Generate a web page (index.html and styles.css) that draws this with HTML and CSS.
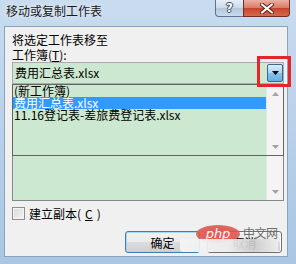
FILE: index.html
```html
<!DOCTYPE html>
<html lang="zh-CN">
<head>
    <meta charset="UTF-8" />
    <title>移动或复制工作表</title>
    <link rel="stylesheet" href="styles.css">
</head>
<body>
<div class="window">
    <div class="titlebar">
        <span class="title">移动或复制工作表</span>
        <div class="cap-btns">
            <span class="cap-btn help">?</span>
            <span class="cap-btn close">
                <svg width="14" height="11" viewBox="0 0 14 11">
                    <path d="M2 1.5 L12 9.5 M12 1.5 L2 9.5" stroke="#5b2117" stroke-width="4" stroke-linecap="square" fill="none"/>
                    <path d="M2 1.5 L12 9.5 M12 1.5 L2 9.5" stroke="#ffffff" stroke-width="2" stroke-linecap="square" fill="none"/>
                </svg>
            </span>
        </div>
    </div>

    <div class="client">
        <div class="label">将选定工作表移至</div>
        <div class="label">工作簿(<u>T</u>):</div>

        <div class="combo">
            <span class="combo-text">费用汇总表.xlsx</span>
            <span class="drop-btn">
                <svg width="7" height="4" viewBox="0 0 7 4"><polygon points="0,0 7,0 3.5,4" fill="#000"/></svg>
            </span>
            <!-- open drop-down list, covers the sheet label and top of the listbox -->
            <div class="dropdown">
                <ul class="items">
                    <li>(新工作簿)</li>
                    <li class="selected">费用汇总表.xlsx</li>
                    <li>11.16登记表-差旅费登记表.xlsx</li>
                </ul>
                <div class="scrollbar">
                    <span class="sb-btn"><svg width="7" height="4" viewBox="0 0 7 4"><polygon points="0,4 7,4 3.5,0" fill="#a3a3a3"/></svg></span>
                    <span class="sb-btn"><svg width="7" height="4" viewBox="0 0 7 4"><polygon points="0,0 7,0 3.5,4" fill="#a3a3a3"/></svg></span>
                </div>
            </div>
        </div>

        <div class="listbox">
            <div class="list-body"></div>
            <div class="scrollbar">
                <span class="sb-btn"><svg width="7" height="4" viewBox="0 0 7 4"><polygon points="0,4 7,4 3.5,0" fill="#a3a3a3"/></svg></span>
                <span class="sb-btn"><svg width="7" height="4" viewBox="0 0 7 4"><polygon points="0,0 7,0 3.5,4" fill="#a3a3a3"/></svg></span>
            </div>
        </div>

        <label class="check-row"><span class="checkbox"></span>建立副本(<u>C</u>)</label>

        <div class="buttons">
            <button class="btn default">确定</button>
            <button class="btn">取消</button>
        </div>
    </div>

    <div class="mark-box"></div>

    <div class="watermark">
        <span class="php">php</span>
        <span class="cn">中文网</span>
        <span class="smear"></span>
    </div>
</div>
</body>
</html>
```

FILE: styles.css
```css
/* Page */
body {
    margin: 0;
    font-family: "Noto Sans CJK SC", sans-serif;
    font-size: 12px;
    color: #000;
}

/* Window frame (Aero glass) */
.window {
    position: relative;
    width: 296px;
    height: 264px;
    box-sizing: border-box;
    padding: 0 8px 7px 4px;
    display: flex;
    flex-direction: column;
    background: linear-gradient(180deg, #c9dcef 0%, #bdd4eb 35%, #aac6e3 100%);
    overflow: hidden;
}

.titlebar {
    height: 26px;
    flex-shrink: 0;
    display: flex;
    justify-content: space-between;
    align-items: flex-start;
}

.title {
    padding: 4px 0 0 2px;
    line-height: 14px;
    color: #1a1a1a;
    text-shadow: 0 0 6px rgba(255, 255, 255, 0.9);
}

/* Caption buttons */
.cap-btns {
    display: flex;
    margin-right: -2px;
}

.cap-btn {
    height: 17px;
    box-sizing: border-box;
    display: flex;
    align-items: center;
    justify-content: center;
    border: 1px solid #5d7490;
    border-top: none;
}

.help {
    width: 28px;
    border-right: none;
    border-radius: 0 0 0 4px;
    background: linear-gradient(180deg, #e6eef6 0%, #cbd9e8 50%, #b3c7dd 52%, #c9dbed 100%);
    font-family: "DejaVu Sans", sans-serif;
    font-weight: bold;
    font-size: 12px;
    color: #fff;
    text-shadow: 0 0 1px #3a4d63, 1px 0 0 #3a4d63, -1px 0 0 #3a4d63, 0 1px 0 #3a4d63, 0 -1px 0 #3a4d63;
}

.close {
    width: 47px;
    border-color: #70302a;
    border-radius: 0 0 4px 0;
    background: linear-gradient(180deg, #eab0a3 0%, #dc7c69 48%, #c8432d 52%, #d66a4c 100%);
}

/* Client area */
.client {
    flex: 1;
    display: flex;
    flex-direction: column;
    background: #f0f0f0;
    border: 1px solid #8aa3bf;
    padding: 5px 3px 3px 7px;
}

.label {
    line-height: 15px;
    height: 15px;
    white-space: nowrap;
}

u {
    text-decoration: underline;
}

/* Combo box */
.combo {
    position: relative;
    height: 22px;
    box-sizing: border-box;
    border: 1px solid #a9abb0;
    background: #cde8d0;
    display: flex;
    align-items: center;
    padding: 0 0 0 2px;
}

.combo-text {
    flex: 1;
    line-height: 14px;
}

.drop-btn {
    width: 16px;
    height: 18px;
    box-sizing: border-box;
    border: 1px solid #3d678d;
    border-radius: 2px;
    background: linear-gradient(180deg, #d9edfa 0%, #a9d5f1 50%, #84c1ea 52%, #67afe0 100%);
    display: flex;
    align-items: center;
    justify-content: center;
}

.dropdown {
    position: absolute;
    left: -1px;
    right: -1px;
    top: calc(100% + 1px);
    height: 72px;
    box-sizing: border-box;
    border: 1px solid #646464;
    background: #cde8d0;
    display: flex;
    z-index: 2;
}

.items {
    flex: 1;
    list-style: none;
    margin: 0;
    padding: 0;
}

.items li {
    height: 12px;
    line-height: 12px;
    padding-left: 1px;
    white-space: nowrap;
}

.items li.selected {
    background: #3399ff;
    color: #fff;
}

.scrollbar {
    width: 17px;
    display: flex;
    flex-direction: column;
    justify-content: space-between;
    background: #f4f4f4;
    border-left: 1px solid #e6e6e6;
    box-sizing: border-box;
}

.sb-btn {
    height: 17px;
    display: flex;
    align-items: center;
    justify-content: center;
}

/* List box (its label is hidden under the drop-down) */
.listbox {
    margin-top: 18px;
    height: 99px;
    box-sizing: border-box;
    border: 1px solid #828790;
    background: #cde8d0;
    display: flex;
}

.list-body {
    flex: 1;
}

/* Checkbox */
.check-row {
    margin-top: 6px;
    height: 13px;
    display: flex;
    align-items: center;
    gap: 4px;
    line-height: 13px;
}

.checkbox {
    width: 13px;
    height: 13px;
    box-sizing: border-box;
    border: 1px solid #8e8f8f;
    background: linear-gradient(135deg, #d9d9d9 0%, #f4f4f4 100%);
    box-shadow: inset 0 0 0 1px #f4f4f4;
}

/* Buttons */
.buttons {
    margin-top: 11px;
    padding-right: 2px;
    display: flex;
    justify-content: flex-end;
    gap: 7px;
}

.btn {
    width: 75px;
    height: 22px;
    padding: 0;
    font-family: "Noto Sans CJK SC", sans-serif;
    font-size: 12px;
    color: #000;
    border: 1px solid #707070;
    border-radius: 3px;
    background: linear-gradient(180deg, #f2f2f2 0%, #ebebeb 50%, #dddddd 51%, #cfcfcf 100%);
    box-shadow: inset 0 0 0 1px #fcfcfc;
}

.btn.default {
    border-color: #3c7fb1;
    box-shadow: inset 0 0 0 1px #a6d8f6;
}

/* Red highlight drawn over the drop button */
.mark-box {
    position: absolute;
    left: 257px;
    top: 56px;
    width: 34px;
    height: 31px;
    box-sizing: border-box;
    border: 3px solid #e3262b;
    z-index: 5;
}

/* Watermark */
.watermark {
    position: absolute;
    left: 178px;
    top: 224px;
    width: 102px;
    height: 30px;
    z-index: 6;
}

.php {
    position: absolute;
    left: 18px;
    top: 1px;
    width: 44px;
    height: 18px;
    border-radius: 50%;
    background: radial-gradient(ellipse at center, #e5473c 0%, #e0564c 60%, #eb8a82 100%);
    color: #fff;
    font-family: "DejaVu Sans", sans-serif;
    font-style: italic;
    font-size: 13px;
    line-height: 17px;
    text-align: center;
    opacity: 0.9;
}

.cn {
    position: absolute;
    left: 65px;
    top: 1px;
    color: #6f6f6f;
    font-size: 12px;
    line-height: 16px;
    letter-spacing: -0.5px;
}

.smear {
    position: absolute;
    left: 2px;
    top: 15px;
    width: 98px;
    height: 13px;
    background: linear-gradient(90deg, rgba(246, 246, 246, 0.9) 0%, rgba(236, 236, 236, 0.95) 50%, rgba(205, 205, 205, 0.9) 75%, rgba(238, 238, 238, 0.9) 100%);
    border-radius: 3px;
}
```
